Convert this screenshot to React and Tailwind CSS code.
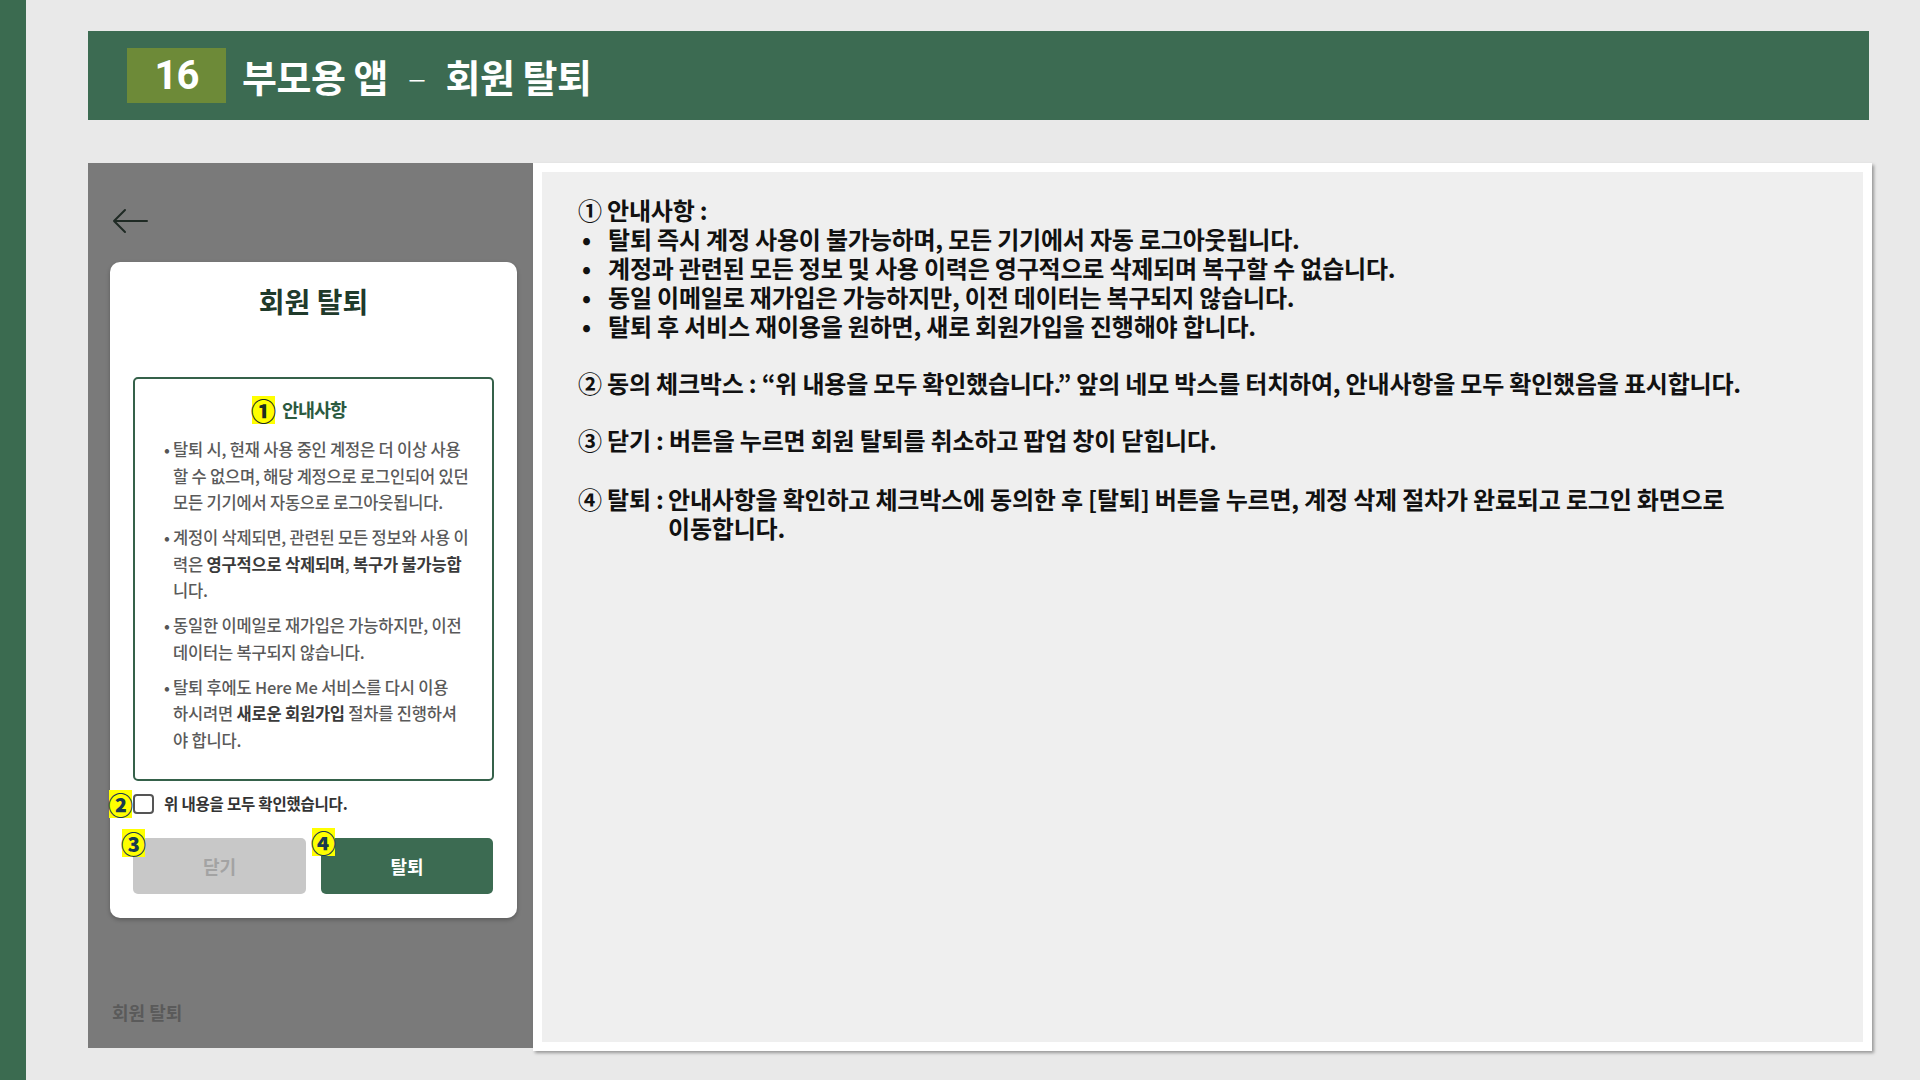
import React from 'react';

const KR = "font-['Noto_Sans_CJK_KR','Noto_Sans',sans-serif]";

const Badge = ({ children, className = '' }) => (
  <span
    className={`absolute flex items-center justify-center w-[23px] h-[28px] bg-[#ffff00] text-[#183a4f] text-[25px] font-black leading-none ${className}`}
  >
    {children}
  </span>
);

const BackArrow = () => (
  <svg width="36" height="26" viewBox="0 0 36 26" fill="none">
    <path d="M2 13H35M2 13L13 2M2 13L13 24" stroke="#1f2a24" strokeWidth="2" strokeLinecap="round" strokeLinejoin="round" />
  </svg>
);

const Bullet = ({ children }) => (
  <div className="flex">
    <span className="w-[9px] shrink-0 text-[#555]">•</span>
    <div>{children}</div>
  </div>
);

const PhonePanel = () => (
  <div className="w-[445px] h-[885px] bg-[#7a7a7a] flex flex-col">
    {/* top bar */}
    <div className="pl-[24px] pt-[45px] h-[99px]">
      <BackArrow />
    </div>

    {/* modal card */}
    <div className="ml-[22px] w-[407px] h-[656px] bg-white rounded-[10px] shadow-[0_2px_4px_rgba(0,0,0,0.25)] flex flex-col px-[23px] pt-[21px]">
      <div className="text-center text-[28px] leading-[36px] font-bold text-[#1f3a2b]">회원 탈퇴</div>

      {/* notice box */}
      <div className="mt-[58px] h-[404px] border-2 border-[#35614a] rounded-[5px] pt-[17px] pl-[29px]">
        <div className="flex items-center justify-center pr-[58px] h-[28px]">
          <span className="flex items-center justify-center w-[23px] h-[28px] bg-[#ffff00] text-[#1c2e22] text-[25px] font-black leading-none">①</span>
          <span className="ml-[7px] text-[18.5px] font-bold text-[#2b5a3f] tracking-[-1px]">안내사항</span>
        </div>

        <div className="mt-[12px] text-[16.5px] leading-[26.5px] text-[#5a5a5a] font-medium whitespace-nowrap tracking-[-0.2px] flex flex-col gap-[8.5px]">
          <Bullet>
            탈퇴 시, 현재 사용 중인 계정은 더 이상 사용<br />
            할 수 없으며, 해당 계정으로 로그인되어 있던<br />
            모든 기기에서 자동으로 로그아웃됩니다.
          </Bullet>
          <Bullet>
            계정이 삭제되면, 관련된 모든 정보와 사용 이<br />
            력은 <b className="font-bold text-[#3a3a3a]">영구적으로 삭제되며</b>, <b className="font-bold text-[#3a3a3a]">복구가 불가능합</b><br />
            니다.
          </Bullet>
          <Bullet>
            동일한 이메일로 재가입은 가능하지만, 이전<br />
            데이터는 복구되지 않습니다.
          </Bullet>
          <Bullet>
            탈퇴 후에도 Here Me 서비스를 다시 이용<br />
            하시려면 <b className="font-bold text-[#3a3a3a]">새로운 회원가입</b> 절차를 진행하셔<br />
            야 합니다.
          </Bullet>
        </div>
      </div>

      {/* agree row */}
      <div className="relative mt-[13px] h-[20px] flex items-center">
        <Badge className="-left-[24px] -top-[4px]">②</Badge>
        <span className="w-[21px] h-[20px] border-2 border-[#555] rounded-[4px] bg-white" />
        <span className="ml-[10px] text-[15.5px] font-bold text-[#333] tracking-[-0.2px]">위 내용을 모두 확인했습니다.</span>
      </div>

      {/* buttons */}
      <div className="mt-[24px] flex gap-[15px]">
        <div className="relative w-[173px] h-[56px] rounded-[5px] bg-[#c8c8c8] flex items-center justify-center text-[18px] font-bold text-[#a3a3a3]">
          <Badge className="-left-[11px] -top-[9px]">③</Badge>
          닫기
        </div>
        <div className="relative w-[172px] h-[56px] rounded-[5px] bg-[#3c6b52] flex items-center justify-center text-[18px] font-bold text-white">
          <Badge className="-left-[9px] -top-[10px]">④</Badge>
          탈퇴
        </div>
      </div>
    </div>

    <div className="mt-auto pb-[24px] pl-[24px] text-[18px] leading-[24px] font-bold text-[#5a5a5a]">회원 탈퇴</div>
  </div>
);

const DescPanel = () => (
  <div className="w-[1339px] h-[888px] bg-white p-[9px] shadow-[2px_2px_3px_rgba(0,0,0,0.35)]">
    <div className="h-full bg-[#efefef] pl-[36px] pt-[23px] text-[24px] leading-[29px] font-bold text-[#111] tracking-[-0.2px] whitespace-nowrap">
      <div>① 안내사항 :</div>
      <div className="flex flex-col">
        {[
          '탈퇴 즉시 계정 사용이 불가능하며, 모든 기기에서 자동 로그아웃됩니다.',
          '계정과 관련된 모든 정보 및 사용 이력은 영구적으로 삭제되며 복구할 수 없습니다.',
          '동일 이메일로 재가입은 가능하지만, 이전 데이터는 복구되지 않습니다.',
          '탈퇴 후 서비스 재이용을 원하면, 새로 회원가입을 진행해야 합니다.',
        ].map((t) => (
          <div key={t} className="flex">
            <span className="w-[30px] pl-[4px] shrink-0">•</span>
            <span>{t}</span>
          </div>
        ))}
      </div>

      <div className="mt-[28px]">② 동의 체크박스 : “위 내용을 모두 확인했습니다.” 앞의 네모 박스를 터치하여, 안내사항을 모두 확인했음을 표시합니다.</div>
      <div className="mt-[28px]">③ 닫기 : 버튼을 누르면 회원 탈퇴를 취소하고 팝업 창이 닫힙니다.</div>
      <div className="mt-[30px] flex">
        <span className="w-[90px] shrink-0">④ 탈퇴 :</span>
        <span>
          안내사항을 확인하고 체크박스에 동의한 후 [탈퇴] 버튼을 누르면, 계정 삭제 절차가 완료되고 로그인 화면으로<br />
          이동합니다.
        </span>
      </div>
    </div>
  </div>
);

export default function App() {
  return (
    <div className={`w-[1920px] h-[1080px] bg-[#e9e9e9] flex overflow-hidden ${KR}`}>
      <div className="w-[26px] h-full bg-[#3b6b50] shrink-0" />

      <div className="pl-[62px] pt-[31px] flex flex-col">
        {/* header */}
        <div className="w-[1781px] h-[89px] bg-[#3c6b52] flex items-center pl-[39px]">
          <div className="w-[99px] h-[55px] bg-[#6d8a38] flex items-center justify-center text-white text-[40px] font-bold font-['Roboto',sans-serif] tracking-[-1px]">
            16
          </div>
          <div className="ml-[16px] text-white text-[38px] font-bold tracking-[-0.5px] flex items-center">
            <span>부모용 앱</span>
            <span className="mx-[20px] font-light text-[34px]">–</span>
            <span>회원 탈퇴</span>
          </div>
        </div>

        <div className="mt-[43px] flex items-start">
          <PhonePanel />
          <DescPanel />
        </div>
      </div>
    </div>
  );
}
